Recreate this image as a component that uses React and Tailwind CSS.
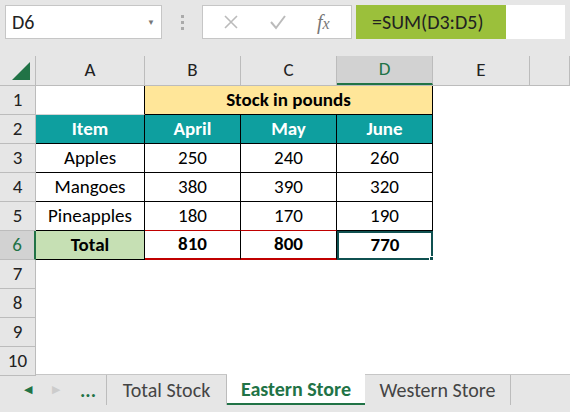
export default function App() {
  const cols = [{ l: "A", w: 109 }, { l: "B", w: 96 }, { l: "C", w: 96 }, { l: "D", w: 96 }, { l: "E", w: 97 }, { l: "", w: 40 }];
  const data = [["Apples", "250", "240", "260"], ["Mangoes", "380", "390", "320"], ["Pineapples", "180", "170", "190"]];
  const cell = "h-full flex items-center justify-center border-r border-b border-[#d4d4d4]";
  const tcell = "h-full flex items-center justify-center border-r border-b border-black";
  return (
    <div className="w-[570px] h-[412px] bg-white overflow-hidden text-[19px] text-black" style={{ fontFamily: "Carlito, 'Liberation Sans', sans-serif" }}>
      <div className="h-[56px] bg-[#e6e6e6] flex items-start pt-[5px] px-[5px]">
        <div className="w-[157px] h-[34px] bg-white border border-[#c6c6c6] flex items-center justify-between px-[6px]">
          <span className="text-[20px] text-[#222]">D6</span>
          <span className="text-[8px] text-[#777]">▼</span>
        </div>
        <div className="w-[40px] h-[34px] flex flex-col items-center justify-center gap-[3px]">
          <div className="w-[3px] h-[3px] bg-[#aaa]" /><div className="w-[3px] h-[3px] bg-[#aaa]" /><div className="w-[3px] h-[3px] bg-[#aaa]" />
        </div>
        <div className="w-[150px] h-[34px] bg-white border border-[#c6c6c6] flex items-center">
          <svg width="16" height="16" viewBox="0 0 16 16" className="ml-[20px]"><path d="M2 2L14 14M14 2L2 14" stroke="#bbb" strokeWidth="1.6" /></svg>
          <svg width="18" height="16" viewBox="0 0 18 16" className="ml-[30px]"><path d="M2 8L7 14L16 2" stroke="#bbb" strokeWidth="2" fill="none" /></svg>
          <span className="ml-[30px] italic text-[#777] text-[20px]" style={{ fontFamily: "'Liberation Serif', serif" }}>f<span className="text-[16px]">x</span></span>
        </div>
        <div className="ml-[4px] w-[150px] h-[34px] bg-[#9bc03b] flex items-center pl-[16px] text-[20px] text-[#222]">=SUM(D3:D5)</div>
        <div className="flex-1 h-[34px] bg-white" />
      </div>
      <div className="h-[30px] flex bg-[#e6e6e6] border-b border-[#bcbcbc]">
        <div className="w-[36px] h-full border-r border-[#bcbcbc] flex items-end justify-end p-[4px]">
          <svg width="20" height="20" viewBox="0 0 20 20"><path d="M19 1V19H1Z" fill="#217346" /></svg>
        </div>
        {cols.map((c, i) => (
          <div key={i} style={{ width: c.w }} className={`h-full flex items-center justify-center border-r border-[#bcbcbc] text-[#222] ${c.l === "D" ? "bg-[#d2d2d2] border-b-2 border-b-[#217346] text-[#217346]" : ""}`}>{c.l}</div>
        ))}
      </div>
      {[1, 2, 3, 4, 5, 6, 7, 8, 9, 10].map((r) => (
        <div key={r} className="h-[29px] flex">
          <div className={`w-[36px] h-full flex items-center justify-center border-r border-b border-[#bcbcbc] ${r === 6 ? "bg-[#d2d2d2] text-[#217346] border-r-2 border-r-[#217346]" : "bg-[#e6e6e6] text-[#222]"}`}>{r}</div>
          {r === 1 && (<>
            <div className={`w-[109px] ${cell} border-r-black`} />
            <div className="w-[288px] h-full flex items-center justify-center bg-[#ffe699] border-r border-b border-black font-bold">Stock in pounds</div>
          </>)}
          {r === 2 && ["Item", "April", "May", "June"].map((t, i) => (
            <div key={i} style={{ width: cols[i].w }} className={`${tcell} bg-[#0e9f9f] text-white font-bold`}>{t}</div>
          ))}
          {r >= 3 && r <= 5 && data[r - 3].map((t, i) => (
            <div key={i} style={{ width: cols[i].w }} className={`${tcell} ${r === 5 && (i === 1 || i === 2) ? "border-b-[#c00000]" : ""}`}>{t}</div>
          ))}
          {r === 6 && (<>
            <div className="w-[109px] h-full flex items-center justify-center bg-[#c6e0b4] border-r border-b border-black font-bold">Total</div>
            <div className="w-[96px] h-full flex items-center justify-center border-r border-black border-b-2 border-b-[#c00000] font-bold">810</div>
            <div className="w-[96px] h-full flex items-center justify-center border-r border-black border-b-2 border-b-[#c00000] font-bold">800</div>
            <div className="w-[96px] h-full flex items-center justify-center border-2 border-[#0f5050] font-bold relative">770<div className="absolute right-[-3px] bottom-[-3px] w-[5px] h-[5px] bg-[#0f5050] border border-white" /></div>
          </>)}
          {r >= 7 && cols.slice(0, 4).map((c, i) => <div key={i} style={{ width: c.w }} className="h-full" />)}
          {r !== 1 && <div className="w-[97px] h-full" />}
        </div>
      ))}
      <div className="h-[38px] mt-[-2px] bg-[#e6e6e6] border-t border-[#c6c6c6] flex items-start text-[20px]">
        <div className="w-[107px] h-[30px] flex items-center border-r border-[#bcbcbc]">
          <span className="ml-[24px] text-[11px] text-[#217346]">◀</span>
          <span className="ml-[20px] text-[11px] text-[#ccc]">▶</span>
          <span className="ml-[20px] font-bold text-[#217346]">...</span>
        </div>
        <div className="w-[120px] h-[30px] flex items-center justify-center border-r border-[#bcbcbc] text-[#444]">Total Stock</div>
        <div className="w-[138px] h-[31px] -mt-px bg-white flex items-center justify-center border-b-2 border-[#217346] text-[#217346] font-bold">Eastern Store</div>
        <div className="w-[146px] h-[30px] flex items-center justify-center border-r border-[#bcbcbc] text-[#444]">Western Store</div>
      </div>
    </div>
  );
}
